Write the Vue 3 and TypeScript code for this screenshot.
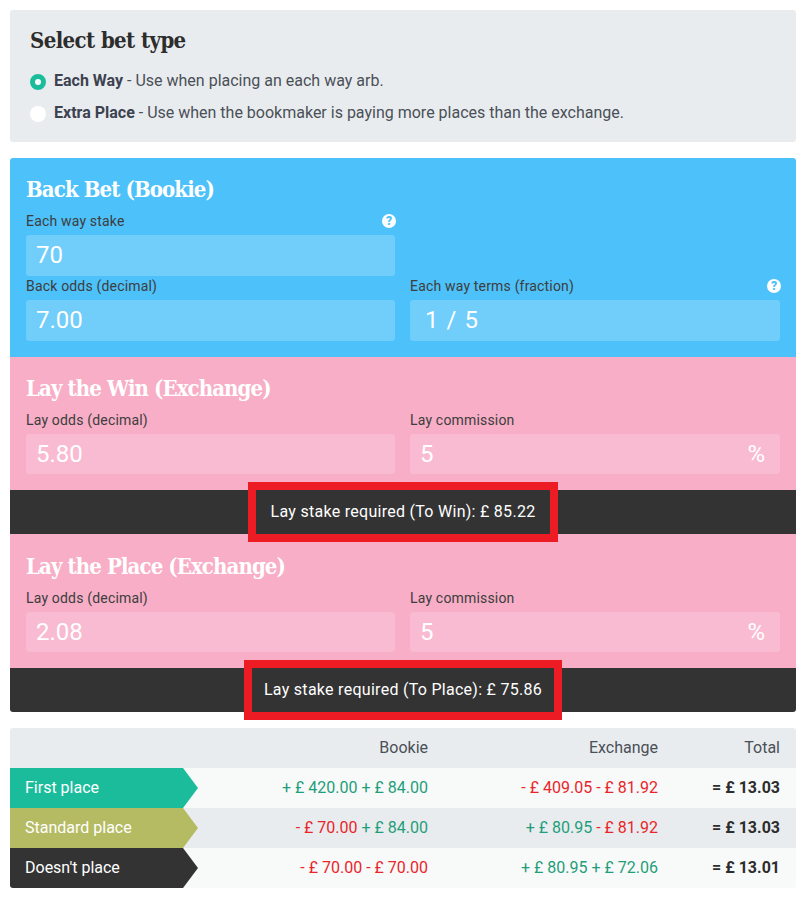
<template>
  <div class="page">
    <section class="type-panel">
      <h2>Select bet type</h2>
      <label v-for="opt in betTypes" :key="opt.name" class="radio-row">
        <span class="radio" :class="{ checked: opt.name === selected }"></span>
        <span><strong>{{ opt.name }}</strong> - {{ opt.desc }}</span>
      </label>
    </section>

    <div class="calc">
      <section class="block back">
        <h3>Back Bet (Bookie)</h3>
        <div class="fields">
          <div class="field">
            <div class="label">Each way stake <span class="help">?</span></div>
            <div class="input">70</div>
          </div>
          <div></div>
          <div class="field">
            <div class="label">Back odds (decimal)</div>
            <div class="input">7.00</div>
          </div>
          <div class="field">
            <div class="label">Each way terms (fraction) <span class="help">?</span></div>
            <div class="input terms"><span>1</span><span>/</span><span>5</span></div>
          </div>
        </div>
      </section>

      <template v-for="lay in lays" :key="lay.title">
        <section class="block lay">
          <h3>{{ lay.title }}</h3>
          <div class="fields">
            <div class="field">
              <div class="label">Lay odds (decimal)</div>
              <div class="input short">{{ lay.odds }}</div>
            </div>
            <div class="field">
              <div class="label">Lay commission</div>
              <div class="input short percent"><span>5</span><span>%</span></div>
            </div>
          </div>
        </section>
        <div class="result">
          <span class="highlight">{{ lay.result }}</span>
        </div>
      </template>
    </div>

    <div class="table">
      <div class="row head">
        <div></div>
        <div class="num">Bookie</div>
        <div class="num">Exchange</div>
        <div class="num">Total</div>
      </div>
      <div v-for="row in rows" :key="row.name" class="row">
        <div class="tag" :class="row.cls">{{ row.name }}</div>
        <div class="num">
          <span v-for="(v, i) in row.bookie" :key="i" class="amount" :class="v[0] === '+' ? 'up' : 'down'">{{ v }}</span>
        </div>
        <div class="num">
          <span v-for="(v, i) in row.exchange" :key="i" class="amount" :class="v[0] === '+' ? 'up' : 'down'">{{ v }}</span>
        </div>
        <div class="num total">= £ {{ row.total }}</div>
      </div>
    </div>
  </div>
</template>

<script setup lang="ts">
const selected = 'Each Way'

const betTypes = [
  { name: 'Each Way', desc: 'Use when placing an each way arb.' },
  { name: 'Extra Place', desc: 'Use when the bookmaker is paying more places than the exchange.' }
]

const lays = [
  { title: 'Lay the Win (Exchange)', odds: '5.80', result: 'Lay stake required (To Win): £ 85.22' },
  { title: 'Lay the Place (Exchange)', odds: '2.08', result: 'Lay stake required (To Place): £ 75.86' }
]

const rows = [
  { name: 'First place', cls: 'teal', bookie: ['+ £ 420.00', '+ £ 84.00'], exchange: ['- £ 409.05', '- £ 81.92'], total: '13.03' },
  { name: 'Standard place', cls: 'olive', bookie: ['- £ 70.00', '+ £ 84.00'], exchange: ['+ £ 80.95', '- £ 81.92'], total: '13.03' },
  { name: "Doesn't place", cls: 'dark', bookie: ['- £ 70.00', '- £ 70.00'], exchange: ['+ £ 80.95', '+ £ 72.06'], total: '13.01' }
]
</script>

<style>
html, body {
  background: #fff;
}
</style>

<style scoped>
.page {
  width: 786px;
  padding: 10px 0 0 10px;
  font-family: Roboto, "Liberation Sans", sans-serif;
  color: #333;
}

.type-panel {
  height: 132px;
  box-sizing: border-box;
  margin-bottom: 16px;
  padding: 16px 20px;
  background: #e9ecee;
  border-radius: 3px;
}

.type-panel h2 {
  margin: 0 0 15px;
  font-family: "DejaVu Serif Condensed", "DejaVu Serif", serif;
  font-size: 22px;
  line-height: 28px;
  font-weight: 700;
  letter-spacing: -0.6px;
  color: #2d2d2d;
}

.radio-row {
  display: flex;
  gap: 8px;
  height: 32px;
  font-size: 16px;
  line-height: 24px;
  color: #4a5058;
}

.radio-row strong {
  font-weight: 700;
  color: #3c4250;
}

.radio {
  width: 16px;
  height: 16px;
  margin-top: 5px;
  background: #fff;
  border-radius: 50%;
  box-sizing: border-box;
}

.radio.checked {
  border: 5px solid #1abc9c;
}

.calc {
  margin-bottom: 16px;
}

.block {
  padding: 16px 16px;
}

.back {
  background: #4dc1f9;
  border-radius: 3px 3px 0 0;
}

.lay {
  background: #f7aec6;
}

.lay + .result + .lay {
  padding-top: 17px;
}

.block h3 {
  margin: 0 0 7px;
  font-family: "DejaVu Serif Condensed", "DejaVu Serif", serif;
  font-size: 22px;
  line-height: 30px;
  font-weight: 700;
  letter-spacing: -0.9px;
  color: #fff;
}

.fields {
  display: grid;
  grid-template-columns: 369px 370px;
  column-gap: 15px;
}

.label {
  display: flex;
  justify-content: space-between;
  align-items: center;
  height: 20px;
  margin-bottom: 4px;
  font-size: 14px;
  line-height: 20px;
  letter-spacing: 0.18px;
  color: #3d3d3d;
}

.help {
  width: 14px;
  height: 14px;
  margin-right: -1px;
  border-radius: 50%;
  background: #fff;
  color: #4dc1f9;
  font-size: 12px;
  line-height: 14px;
  font-weight: 900;
  letter-spacing: 0;
  text-align: center;
}

.input {
  height: 41px;
  padding: 0 10px;
  box-sizing: border-box;
  border-radius: 3px;
  background: #71cdfa;
  color: #fff;
  font-size: 24px;
  line-height: 41px;
}

.input.short {
  height: 40px;
  line-height: 40px;
  background: #f9bbd1;
}

.terms {
  display: flex;
  gap: 8px;
  padding-left: 15px;
}

.percent {
  display: flex;
  justify-content: space-between;
  padding-right: 15px;
}

.result {
  display: flex;
  justify-content: center;
  height: 44px;
  background: #333;
  color: #fff;
  font-size: 16px;
  line-height: 44px;
  letter-spacing: 0.28px;
}

.result:last-child {
  border-radius: 0 0 3px 3px;
}

.highlight {
  position: relative;
  padding: 0 15px;
}

.result:last-child .highlight {
  padding: 0 12px;
}

.highlight::after {
  content: "";
  position: absolute;
  inset: 0;
  margin: -8px;
  border: 8px solid #ed1c24;
}

.table {
  border-radius: 3px;
  overflow: hidden;
}

.row {
  display: grid;
  grid-template-columns: 188px 230px 230px 122px;
  height: 40px;
  padding-right: 16px;
  font-size: 16px;
  line-height: 40px;
  background: #f8f9f9;
}

.row:nth-child(odd) {
  background: #e9ecee;
}

.head {
  color: #4a5058;
}

.num {
  text-align: right;
  white-space: nowrap;
}

.amount + .amount {
  margin-left: 4px;
}

.tag {
  padding-left: 15px;
  color: #fff;
  clip-path: polygon(0 0, 173px 0, 100% 50%, 173px 100%, 0 100%);
}

.teal { background: #1abc9c; }
.olive { background: #b5bb62; }
.dark { background: #333; }

.up { color: #1f9e7a; }
.down { color: #e8262a; }

.total {
  font-weight: 700;
  color: #2d2d2d;
}
</style>
